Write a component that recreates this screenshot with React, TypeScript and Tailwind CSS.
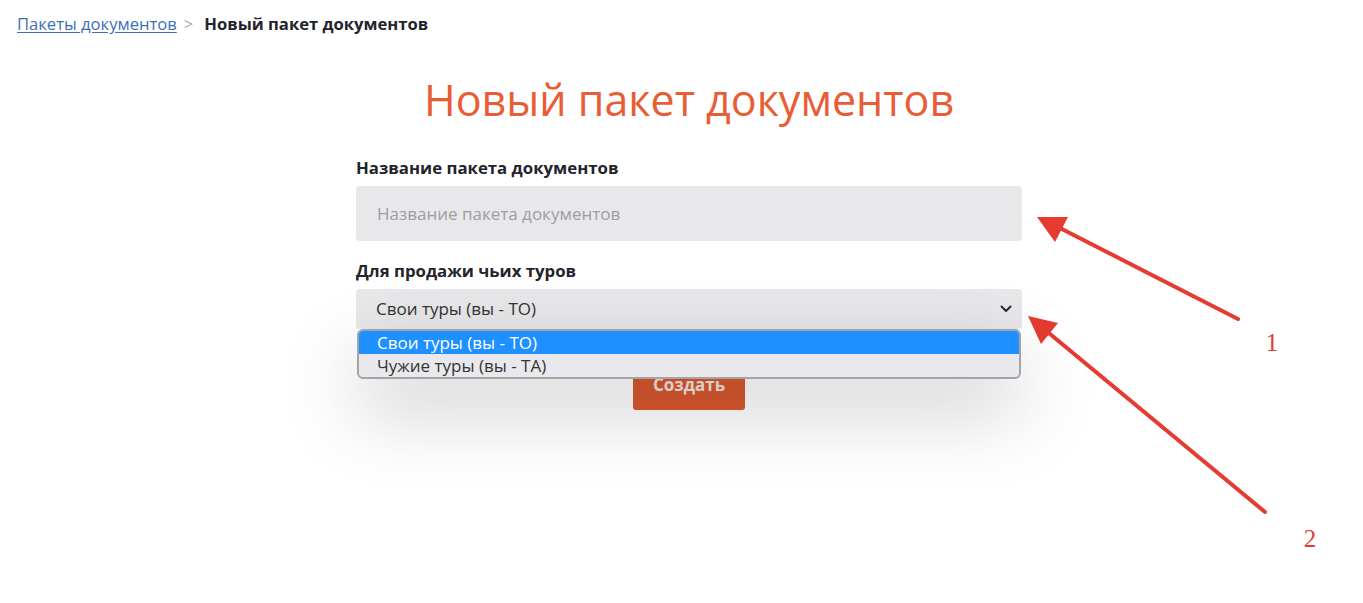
import React from 'react';

const Arrows: React.FC = () => (
  <svg className="pointer-events-none absolute inset-0" width="1363" height="603" viewBox="0 0 1363 603">
    <g stroke="#e53b30" strokeWidth="4" strokeLinecap="round">
      <line x1="1238" y1="319" x2="1056" y2="226" />
      <line x1="1265" y1="512" x2="1044" y2="329" />
    </g>
    <g fill="#e53b30">
      <polygon points="1037,217 1068,217 1055,242" />
      <polygon points="1028,316 1058,323 1041,344" />
    </g>
    <text x="1272" y="351" fill="#e53b30" fontSize="25" textAnchor="middle" fontFamily="'Liberation Serif', serif">1</text>
    <text x="1310" y="547" fill="#e53b30" fontSize="25" textAnchor="middle" fontFamily="'Liberation Serif', serif">2</text>
  </svg>
);

const App: React.FC = () => {
  return (
    <div className="relative min-h-screen w-full overflow-hidden bg-white font-['Open_Sans',sans-serif]">
      <div className="flex items-center px-[17px] pt-[12px] text-[16.6px] leading-[24px]">
        <a href="#" className="text-[#3c70b8] underline underline-offset-2">Пакеты документов</a>
        <span className="ml-[7px] text-[#a8a8ad]">&gt;</span>
        <span className="ml-[11px] font-bold text-[#23232b]">Новый пакет документов</span>
      </div>

      <div className="pl-[15px]">
        <h1 className="mt-[38px] text-center text-[43px] leading-[52px] text-[#e85d35]">Новый пакет документов</h1>

        <div className="mx-auto mt-[31px] w-[666px]">
          <label className="block text-[16.8px] font-bold leading-[22px] text-[#23232b]">Название пакета документов</label>
          <input
            className="mt-[7px] h-[55px] w-full rounded-[4px] bg-[#e8e8ea] px-[21px] text-[17px] text-[#333] outline-none placeholder:text-[#9d9da3]"
            placeholder="Название пакета документов"
          />

          <label className="mt-[19px] block text-[16.8px] font-bold leading-[22px] text-[#23232b]">Для продажи чьих туров</label>
          <div className="relative mt-[7px]">
            <div className="flex h-[40px] w-full items-center justify-between rounded-[4px] bg-[#e8e8ea] pl-[20px] pr-[10px] text-[17px] text-[#333]">
              <span>Свои туры (вы - ТО)</span>
              <svg width="12" height="8" viewBox="0 0 12 8" fill="none">
                <path d="M1.5 1.5L6 6L10.5 1.5" stroke="#2a2a33" strokeWidth="2" strokeLinecap="round" strokeLinejoin="round" />
              </svg>
            </div>
            <div className="absolute left-[1px] right-[1px] top-[40px] z-10 overflow-hidden rounded-[6px] border-2 border-[#a3a3a8] bg-[#e9e9ed] text-[17px] leading-[23px] shadow-[0_30px_80px_rgba(0,0,0,0.22)]">
              <div className="bg-[#1e90ff] pl-[18px] text-white">Свои туры (вы - ТО)</div>
              <div className="pl-[18px] text-[#333]">Чужие туры (вы - ТА)</div>
            </div>
          </div>

          <div className="mt-[31px] flex justify-center">
            <button className="h-[50px] w-[112px] rounded-[3px] bg-[#d9582f] text-[17px] font-bold text-[#f2e6e0]">Создать</button>
          </div>
        </div>
      </div>

      <Arrows />
    </div>
  );
};

export default App;
